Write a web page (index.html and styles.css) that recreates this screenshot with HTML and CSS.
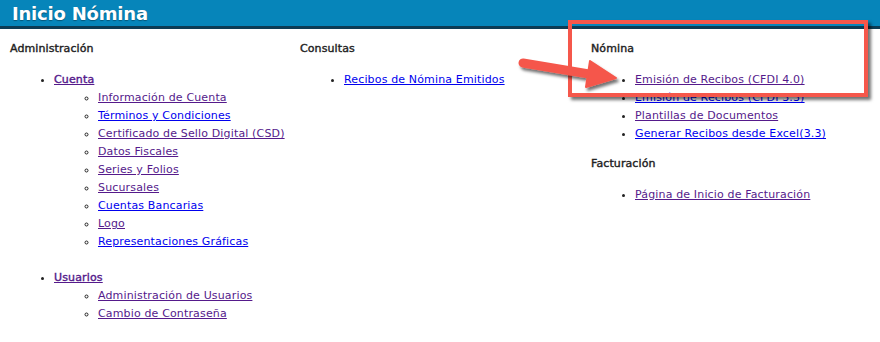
FILE: index.html
```html
<!DOCTYPE html>
<html lang="es">
<head>
  <meta charset="UTF-8" />
  <title>Inicio Nómina</title>
  <link rel="stylesheet" href="styles.css">
</head>
<body>
  <header class="top-bar">Inicio Nómina</header>

  <div class="menu-grid">
    <div class="menu-col">
      <h3>Administración</h3>
      <ul class="main-list">
        <li>
          <a href="#" class="visited strong">Cuenta</a>
          <ul class="sub-list">
            <li><a href="#" class="visited">Información de Cuenta</a></li>
            <li><a href="#">Términos y Condiciones</a></li>
            <li><a href="#" class="visited">Certificado de Sello Digital (CSD)</a></li>
            <li><a href="#" class="visited">Datos Fiscales</a></li>
            <li><a href="#" class="visited">Series y Folios</a></li>
            <li><a href="#" class="visited">Sucursales</a></li>
            <li><a href="#">Cuentas Bancarias</a></li>
            <li><a href="#" class="visited">Logo</a></li>
            <li><a href="#">Representaciones Gráficas</a></li>
          </ul>
        </li>
        <li class="spaced">
          <a href="#" class="visited strong">Usuarios</a>
          <ul class="sub-list">
            <li><a href="#" class="visited">Administración de Usuarios</a></li>
            <li><a href="#" class="visited">Cambio de Contraseña</a></li>
          </ul>
        </li>
      </ul>
    </div>

    <div class="menu-col">
      <h3>Consultas</h3>
      <ul class="main-list">
        <li><a href="#">Recibos de Nómina Emitidos</a></li>
      </ul>
    </div>

    <div class="menu-col">
      <h3>Nómina</h3>
      <ul class="main-list">
        <li><a href="#" class="visited">Emisión de Recibos (CFDI 4.0)</a></li>
        <li><a href="#">Emisión de Recibos (CFDI 3.3)</a></li>
        <li><a href="#" class="visited">Plantillas de Documentos</a></li>
        <li><a href="#">Generar Recibos desde Excel(3.3)</a></li>
      </ul>
      <h3>Facturación</h3>
      <ul class="main-list">
        <li><a href="#" class="visited">Página de Inicio de Facturación</a></li>
      </ul>
    </div>
  </div>

  <!-- annotation drawn over the page -->
  <div class="note-box"></div>
  <svg class="note-arrow" width="110" height="50" viewBox="0 0 110 50">
    <defs>
      <filter id="shade" x="-20%" y="-40%" width="150%" height="190%">
        <feDropShadow dx="2" dy="3" stdDeviation="1.6" flood-color="#000" flood-opacity="0.55"/>
      </filter>
    </defs>
    <g filter="url(#shade)" fill="#f5574b" stroke="#f5574b">
      <line x1="8" y1="11" x2="80" y2="23" stroke-width="9" stroke-linecap="round"/>
      <polygon points="75,9 101,26 71,35" stroke-width="2" stroke-linejoin="round"/>
    </g>
  </svg>
</body>
</html>
```

FILE: styles.css
```css
body {
  margin: 0;
  font-family: 'DejaVu Sans', Verdana, sans-serif;
  font-size: 11px;
  color: #222;
  background: #fff;
}

.top-bar {
  height: 26px;
  line-height: 27px;
  padding-left: 12px;
  background: #0685ba;
  border-bottom: 3px solid #0c3b54;
  color: #fff;
  font-size: 18px;
  font-weight: bold;
  letter-spacing: -0.2px;
  text-shadow: 0 1px 1px rgba(0, 0, 0, 0.35);
}

.menu-grid {
  display: grid;
  grid-template-columns: 290px 291px 1fr;
  padding: 11px 0 0 10px;
}

.menu-col h3 {
  margin: 0 0 13px;
  font-size: 11px;
  line-height: 18px;
  font-weight: normal;
  color: #222;
  -webkit-text-stroke: 0.4px #222;
  letter-spacing: 0.1px;
}

.main-list,
.sub-list {
  margin: 0;
  padding-left: 44px;
  line-height: 18px;
  letter-spacing: 0.15px;
}

.main-list {
  list-style: disc;
  margin-bottom: 12px;
}

.sub-list {
  list-style: circle;
}

.main-list li.spaced {
  margin-top: 18px;
}

a {
  color: #0000ee;
}

a.visited {
  color: #551a8b;
}

a.strong {
  -webkit-text-stroke: 0.4px #551a8b;
}

.note-box {
  position: absolute;
  left: 568px;
  top: 20px;
  width: 292px;
  height: 69px;
  border: 4px solid #f5574b;
  box-shadow: 3px 3px 3px rgba(0, 0, 0, 0.55);
}

.note-arrow {
  position: absolute;
  left: 515px;
  top: 52px;
}
```
